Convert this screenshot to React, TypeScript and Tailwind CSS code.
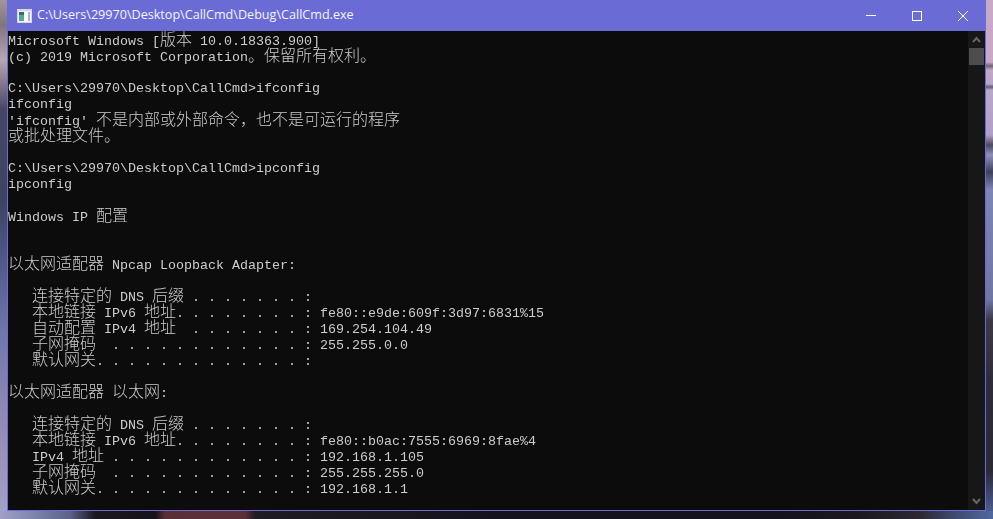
const LINES = [
    "Microsoft Windows [版本 10.0.18363.900]",
    "(c) 2019 Microsoft Corporation。保留所有权利。",
    "",
    "C:\\Users\\29970\\Desktop\\CallCmd>ifconfig",
    "ifconfig",
    "'ifconfig' 不是内部或外部命令，也不是可运行的程序",
    "或批处理文件。",
    "",
    "C:\\Users\\29970\\Desktop\\CallCmd>ipconfig",
    "ipconfig",
    "",
    "Windows IP 配置",
    "",
    "",
    "以太网适配器 Npcap Loopback Adapter:",
    "",
    "   连接特定的 DNS 后缀 . . . . . . . :",
    "   本地链接 IPv6 地址. . . . . . . . : fe80::e9de:609f:3d97:6831%15",
    "   自动配置 IPv4 地址  . . . . . . . : 169.254.104.49",
    "   子网掩码  . . . . . . . . . . . . : 255.255.0.0",
    "   默认网关. . . . . . . . . . . . . :",
    "",
    "以太网适配器 以太网:",
    "",
    "   连接特定的 DNS 后缀 . . . . . . . :",
    "   本地链接 IPv6 地址. . . . . . . . : fe80::b0ac:7555:6969:8fae%4",
    "   IPv4 地址 . . . . . . . . . . . . : 192.168.1.105",
    "   子网掩码  . . . . . . . . . . . . : 255.255.255.0",
    "   默认网关. . . . . . . . . . . . . : 192.168.1.1",
];

// the console font is 8px wide for latin and 16px for CJK, so runs get their own size
function ConsoleLine({ text }: { text: string }) {
    const runs = text.match(/[\u4e00-\u9fff。，]+|[^\u4e00-\u9fff。，]+/g) ?? [];
    return (
        <div className="h-4 whitespace-pre leading-4">
            {runs.map((run, i) =>
                /[\u4e00-\u9fff。，]/.test(run) ? (
                    <span key={i} className="font-['Noto_Sans_CJK_SC',sans-serif] text-[16px] font-light leading-4">
                        {run}
                    </span>
                ) : (
                    <span key={i} className="font-['Liberation_Mono',monospace] text-[13.333px] leading-4">
                        {run}
                    </span>
                ),
            )}
        </div>
    );
}

function ConsoleIcon() {
    return (
        <svg width="15" height="14" viewBox="0 0 15 14">
            <rect x="0" y="0" width="15" height="14" fill="#d4d8e4" />
            <rect x="1" y="2" width="13" height="11" fill="#eef0f6" />
            <rect x="2" y="3" width="5" height="3" fill="#2f6f68" />
            <rect x="2" y="6" width="5" height="6" fill="#58a890" />
            <rect x="7" y="3" width="4" height="9" fill="#fbfcfe" />
            <rect x="11" y="3" width="2" height="9" fill="#aeb4c8" />
        </svg>
    );
}

export default function App() {
    return (
        <div className="flex h-[519px] w-[993px] flex-col overflow-hidden">
            <div className="flex h-[511px]">
                <div className="w-[7px] bg-[linear-gradient(180deg,#a3949c_0px,#7f7580_25px,#b7a6b4_60px,#8a7f90_80px,#454663_110px,#3e4262_200px,#4c5482_250px,#6f76aa_330px,#8b86b4_400px,#9c92ba_460px,#a0a0c8_511px)]" />
                <div className="flex w-[979px] flex-col border-x border-b border-[#6b6bd6] bg-[#0c0c0c]">
                    <div className="-mx-px flex h-[31px] shrink-0 items-center bg-[#6b6bd6] pl-[10px]">
                        <ConsoleIcon />
                        <span className="ml-[5px] font-['Open_Sans',sans-serif] text-[12.6px] text-[#f4f4ff]">
                            C:\Users\29970\Desktop\CallCmd\Debug\CallCmd.exe
                        </span>
                        <div className="ml-auto flex h-full">
                            <div className="flex w-[46px] items-center justify-center">
                                <div className="h-px w-2.5 bg-white" />
                            </div>
                            <div className="flex w-[46px] items-center justify-center">
                                <div className="size-2.5 border border-white" />
                            </div>
                            <div className="flex w-[46px] items-center justify-center">
                                <svg width="10" height="10" viewBox="0 0 10 10" stroke="white" strokeWidth="1">
                                    <path d="M0 0L10 10M10 0L0 10" />
                                </svg>
                            </div>
                        </div>
                    </div>
                    <div className="flex min-h-0 flex-1">
                        <div className="-mt-px flex-1 text-[#cccccc] [will-change:transform]">
                            {LINES.map((line, i) => (
                                <ConsoleLine key={i} text={line} />
                            ))}
                        </div>
                        <div className="flex w-[17px] shrink-0 flex-col items-center bg-[#171717]">
                            <div className="flex h-[17px] items-center justify-center">
                                <svg width="9" height="7" viewBox="0 0 9 7" fill="none" stroke="#666666" strokeWidth="2">
                                    <path d="M1 6L4.5 2L8 6" />
                                </svg>
                            </div>
                            <div className="h-[17px] w-[15px] bg-[#4d4d4d]" />
                            <div className="mt-auto flex h-[17px] items-center justify-center">
                                <svg width="9" height="7" viewBox="0 0 9 7" fill="none" stroke="#666666" strokeWidth="2">
                                    <path d="M1 1L4.5 5L8 1" />
                                </svg>
                            </div>
                        </div>
                    </div>
                </div>
                <div className="w-[7px] bg-[linear-gradient(180deg,#c9a9c8_0px,#c8a8c8_62px,#6d6476_66px,#c4a8c8_70px,#b8a6cc_84px,#5c5c70_87px,#b8a8cc_90px,#b0a0c8_135px,#4c4a5c_145px,#8d90bc_155px,#40405a_172px,#7e86b6_190px,#6f76a4_300px,#3d3848_320px,#2e2c3c_380px,#2a2836_470px,#4a5a90_511px)]" />
            </div>
            <div className="h-2 bg-[linear-gradient(90deg,#a0a0c8_0px,#8088b0_30px,#5c6288_70px,#1c1820_95px,#14121a_155px,#5a3038_165px,#5c3038_245px,#201c24_255px,#14121a_500px,#14121a_780px,#1c1a20_860px,#2c2832_920px,#3c4668_950px,#5068a0_993px)]" />
        </div>
    );
}
